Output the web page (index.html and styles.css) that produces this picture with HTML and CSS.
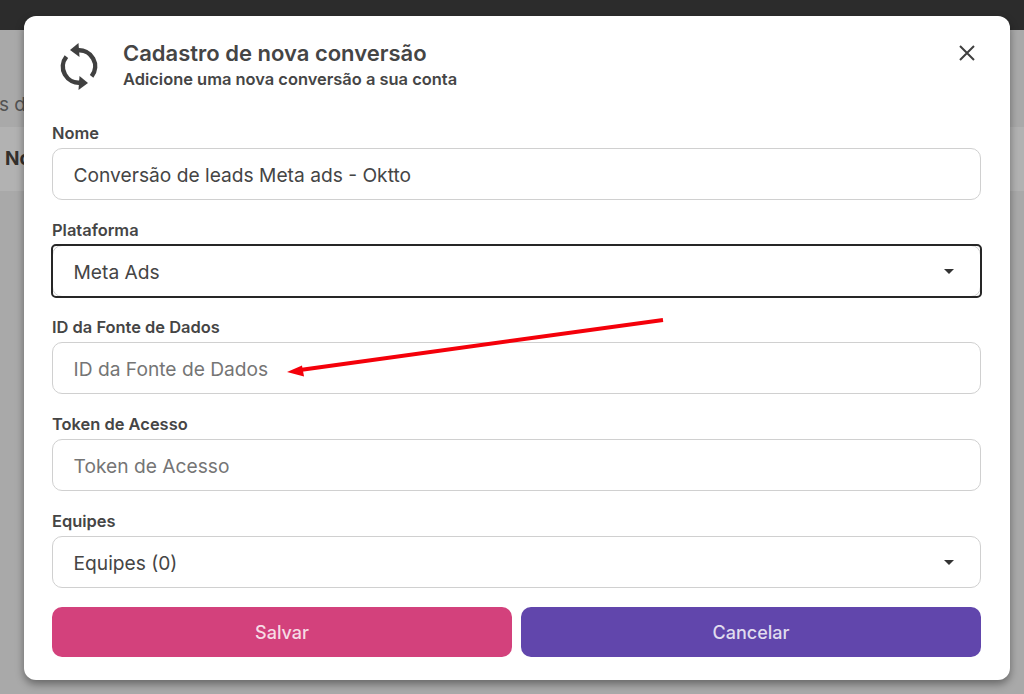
FILE: index.html
```html
<!DOCTYPE html>
<html lang="pt-BR">
<head>
    <meta charset="UTF-8">
    <meta name="viewport" content="width=device-width, initial-scale=1.0">
    <title>Cadastro de nova conversão</title>
    <link rel="stylesheet" href="styles.css">
</head>
<body>
    <div class="topbar"></div>
    <div class="page">
        <p class="page-text">s d</p>
        <div class="table-head">Nome</div>
    </div>

    <div class="backdrop"></div>

    <div class="modal">
        <div class="modal-header">
            <svg class="sync-icon" viewBox="0 0 60 60" width="60" height="60">
                <path class="sync-arc" d="M27 15.5A16 16 0 0 1 41.6 41.4"/>
                <path class="sync-arc" d="M31 47.5A16 16 0 0 1 16.4 21.6"/>
                <path class="sync-head" d="M20 15L28.5 8L29.5 22Z"/>
                <path class="sync-head" d="M38 48L29.5 41L28.5 55Z"/>
            </svg>
            <div class="modal-title">
                <h2>Cadastro de nova conversão</h2>
                <p>Adicione uma nova conversão a sua conta</p>
            </div>
            <svg class="close-icon" viewBox="0 0 16 16" width="16" height="16">
                <path d="M1 1l14 14M15 1L1 15"/>
            </svg>
        </div>

        <form class="form">
            <div class="field">
                <label>Nome</label>
                <div class="control">Conversão de leads Meta ads - Oktto</div>
            </div>
            <div class="field">
                <label>Plataforma</label>
                <div class="control focused">Meta Ads<span class="caret"></span></div>
            </div>
            <div class="field">
                <label>ID da Fonte de Dados</label>
                <div class="control placeholder">ID da Fonte de Dados</div>
            </div>
            <div class="field">
                <label>Token de Acesso</label>
                <div class="control placeholder">Token de Acesso</div>
            </div>
            <div class="field">
                <label>Equipes</label>
                <div class="control">Equipes (0)<span class="caret"></span></div>
            </div>
            <div class="actions">
                <button type="button" class="btn-save">Salvar</button>
                <button type="button" class="btn-cancel">Cancelar</button>
            </div>
        </form>
    </div>

    <!-- red arrow drawn over the screenshot -->
    <svg class="annotation" viewBox="0 0 1024 694" width="1024" height="694">
        <path class="arrow-line" d="M663 320L300 370"/>
        <path class="arrow-head" d="M287 372L302 365.5L304 376.5Z"/>
    </svg>
</body>
</html>
```

FILE: styles.css
```css
* {
    margin: 0;
    padding: 0;
    box-sizing: border-box;
    font-family: Inter, 'Noto Sans', sans-serif;
}

body {
    width: 1024px;
    height: 694px;
    overflow: hidden;
    background-color: #f3f3f3;
    position: relative;
}

.topbar {
    height: 30px;
    background-color: #3f3f3f;
}

.page {
    padding-top: 64px;
}

.page-text {
    font-size: 19px;
    line-height: 22px;
    margin-left: -1px;
    color: #777;
    white-space: nowrap;
}

.table-head {
    margin-top: 11px;
    height: 64px;
    background-color: white;
    padding: 20px 0 0 5px;
    font-size: 19px;
    font-weight: 700;
    color: #4a4540;
}

.backdrop {
    position: absolute;
    inset: 0;
    background-color: rgba(0, 0, 0, 0.3);
}

.modal {
    position: absolute;
    left: 24px;
    top: 16px;
    width: 986px;
    height: 664px;
    padding: 0 29px 0 28px;
    background: white;
    border-radius: 12px;
    box-shadow: 0 4px 9px rgba(0, 0, 0, 0.4);
    color: #454545;
}

.modal-header {
    height: 107px;
    padding-top: 12px;
    display: flex;
    align-items: flex-start;
}

.sync-icon {
    margin: 7px 0 0 -2px;
    flex: none;
}

.sync-arc {
    fill: none;
    stroke: #404040;
    stroke-width: 4.5;
}

.sync-head {
    fill: #404040;
}

.modal-title {
    margin: 9.5px 0 0 13px;
    flex: 1;
}

.modal-title h2 {
    font-size: 22px;
    line-height: 30px;
    font-weight: 600;
}

.modal-title p {
    font-size: 16.45px;
    line-height: 20px;
    font-weight: 600;
    margin-top: 1.5px;
}

.close-icon {
    margin: 17px 6px 0 0;
    fill: none;
    stroke: #404040;
    stroke-width: 2;
}

.form {
    display: flex;
    flex-direction: column;
}

.field {
    height: 97px;
}

.field label {
    display: block;
    font-size: 16.45px;
    line-height: 20px;
    font-weight: 600;
    margin-bottom: 5px;
    margin-top: -0.5px;
}

.control {
    position: relative;
    height: 52px;
    padding: 2px 21px 0 20.5px;
    border: 1px solid #d0d0d0;
    border-radius: 10px;
    display: flex;
    align-items: center;
    justify-content: space-between;
    font-size: 19.2px;
    color: #454545;
}

/* focus ring sits on top of the normal border, with tighter corners */
.control.focused::after {
    content: "";
    position: absolute;
    inset: -2px;
    border: 2.5px solid #262626;
    border-radius: 5px;
}

.control.placeholder {
    color: #757575;
}

.caret {
    width: 0;
    height: 0;
    margin-right: 5px;
    border-left: 5.5px solid transparent;
    border-right: 5.5px solid transparent;
    border-top: 5.5px solid #333;
}

.actions {
    display: flex;
    gap: 9px;
    margin-top: -1px;
}

.actions button {
    flex: 1;
    height: 50px;
    border: none;
    border-radius: 10px;
    color: rgba(255, 255, 255, 0.82);
    font-size: 18px;
    font-weight: 500;
}

.btn-save {
    background-color: #d3417c;
}

.btn-cancel {
    background-color: #6146ac;
}

.annotation {
    position: absolute;
    left: 0;
    top: 0;
}

.arrow-line {
    fill: none;
    stroke: #f4000a;
    stroke-width: 4;
}

.arrow-head {
    fill: #f4000a;
}
```
